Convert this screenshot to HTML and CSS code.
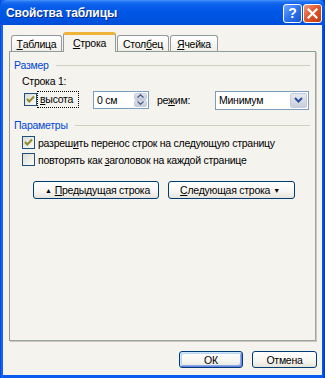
FILE: index.html
```html
<!DOCTYPE html>
<html>
<head>
<meta charset="utf-8">
<link rel="stylesheet" href="styles.css">
</head>
<body>
<div class="window">
  <div class="titlebar">
    <span class="title">Свойства таблицы</span>
    <div class="tb-buttons">
      <span class="tb-btn help">?</span>
      <span class="tb-btn close">
        <svg width="11" height="11" viewBox="0 0 11 11"><path d="M1.5 1.5 L9.5 9.5 M9.5 1.5 L1.5 9.5" stroke="#fff" stroke-width="2.2" stroke-linecap="square"/></svg>
      </span>
    </div>
  </div>
  <div class="client">
    <div class="tabs">
      <div class="tab t1"><u>Т</u>аблица</div>
      <div class="tab t2 active"><u>С</u>трока</div>
      <div class="tab t3">Стол<u>б</u>ец</div>
      <div class="tab t4"><u>Я</u>чейка</div>
    </div>
    <div class="panel">
      <div class="group-head"><span class="gl">Размер</span><span class="gline"></span></div>
      <div class="row-label">Строка 1:</div>
      <div class="size-row">
        <div class="cb-wrap focus">
          <span class="cb checked"><svg width="11" height="11" viewBox="0 0 11 11"><path d="M2 5 L4.3 7.5 L9 2.5" fill="none" stroke="#8F8A2E" stroke-width="2"/></svg></span>
          <span class="cb-text"><u>в</u>ысота</span>
        </div>
        <div class="spin">
          <span class="spin-val">0 см</span>
          <span class="spin-btns">
            <span class="sb up"><svg width="7" height="4" viewBox="0 0 7 4"><path d="M0.5 3.5 L3.5 0.8 L6.5 3.5" fill="none" stroke="#4D6185" stroke-width="1.4"/></svg></span>
            <span class="sb down"><svg width="7" height="4" viewBox="0 0 7 4"><path d="M0.5 0.5 L3.5 3.2 L6.5 0.5" fill="none" stroke="#4D6185" stroke-width="1.4"/></svg></span>
          </span>
        </div>
        <span class="mode-label">ре<u>ж</u>им:</span>
        <div class="select">
          <span class="sel-val">Минимум</span>
          <span class="sel-btn"><svg width="9" height="6" viewBox="0 0 9 6"><path d="M1 1 L4.5 4.5 L8 1" fill="none" stroke="#2D4F9E" stroke-width="2"/></svg></span>
        </div>
      </div>
      <div class="group-head g2"><span class="gl">Параметры</span><span class="gline"></span></div>
      <div class="cb-row first">
        <span class="cb checked"><svg width="11" height="11" viewBox="0 0 11 11"><path d="M2 5 L4.3 7.5 L9 2.5" fill="none" stroke="#8F8A2E" stroke-width="2"/></svg></span>
        <span class="cb-text">разреш<u>и</u>ть перенос строк на следующую страницу</span>
      </div>
      <div class="cb-row">
        <span class="cb"></span>
        <span class="cb-text">повторять как <u>з</u>аголовок на каждой странице</span>
      </div>
      <div class="nav-row">
        <button class="btn nav1"><span class="arr">&#9650;</span> <u>П</u>редыдущая строка</button>
        <button class="btn nav2"><u>С</u>ледующая строка <span class="arr">&#9660;</span></button>
      </div>
    </div>
    <div class="footer">
      <button class="btn ok">ОК</button>
      <button class="btn cancel">Отмена</button>
    </div>
  </div>
</div>
</body>
</html>
```
FILE: styles.css
```css
* { box-sizing: border-box; }
html, body { margin: 0; padding: 0; }
body {
  font-family: "Liberation Sans", Arial, sans-serif;
  font-size: 10.5px;
  letter-spacing: -0.25px;
  color: #000;
  background: #fff;
}
.window {
  width: 325px;
  height: 378px;
  display: flex;
  flex-direction: column;
  background: linear-gradient(90deg, #0039C8 0, #0A5CF0 1px, #1C6AF5 2px, #0A5CF0 3px, #0A5CF0 322px, #0045D8 324px, #0030B0 325px);
}
.titlebar {
  height: 25px;
  flex: none;
  display: flex;
  align-items: center;
  justify-content: space-between;
  padding-left: 6px;
  background: linear-gradient(#4A95FA 0, #1E6FF3 2px, #0A5FEA 5px, #0057E6 12px, #0052E0 20px, #004ED8 25px);
  border-radius: 7px 7px 0 0;
}
.title {
  color: #fff;
  font-weight: bold;
  font-size: 12px;
  letter-spacing: -0.1px;
  text-shadow: 1px 1px 0 #0A2A8C;
  margin-top: 1px;
}
.tb-buttons {
  display: flex;
  gap: 1px;
  margin-right: 3px;
  margin-top: 1px;
}
.tb-btn {
  width: 19px;
  height: 19px;
  border: 1px solid #fff;
  border-radius: 3px;
  display: flex;
  align-items: center;
  justify-content: center;
  color: #fff;
  font-weight: bold;
  font-size: 14px;
  letter-spacing: 0;
}
.help {
  background: linear-gradient(135deg, #6FA6FF 0, #2D72EE 50%, #1A55D0 100%);
}
.close {
  background: linear-gradient(135deg, #F29A7E 0, #E2582E 45%, #C23A12 100%);
}
.client {
  flex: 1;
  margin: 0 3px 3px 3px;
  background: #F4F3EE;
  display: flex;
  flex-direction: column;
}
.tabs {
  display: flex;
  align-items: flex-end;
  height: 26px;
  padding-left: 8px;
  position: relative;
  z-index: 1;
}
.tab {
  height: 16px;
  border: 1px solid #919B9C;
  border-bottom: none;
  border-radius: 3px 3px 0 0;
  background: linear-gradient(#FFFFFF, #F0EFE8);
  display: flex;
  align-items: center;
  justify-content: center;
  margin-right: 1px;
}
.t1 { width: 51px; }
.t2 { width: 53px; }
.t3 { width: 52px; }
.t4 { width: 48px; }
.tab.active {
  height: 20px;
  margin-bottom: -1px;
  background: #F4F3EE;
  border-top: 3px solid #F0B33A;
  padding-bottom: 1px;
  border-radius: 3px 3px 0 0;
}
.panel {
  margin-left: 6px;
  width: 307px;
  height: 290px;
  border: 1px solid #919B9C;
  border-right-color: #9EA49E;
  border-bottom-color: #9EA49E;
  box-shadow: 1px 1px 0 #C9C8BE;
  background: #F4F3EE;
  padding: 6px 5px 0 4px;
}
.group-head {
  display: flex;
  align-items: center;
  height: 14px;
}
.gl { color: #0046D5; }
.gline {
  flex: 1;
  height: 1px;
  background: #D0D0BF;
  margin-left: 7px;
}
.row-label {
  height: 13px;
  line-height: 13px;
  margin-top: 3px;
  padding-left: 8px;
}
.size-row {
  display: flex;
  align-items: center;
  height: 19px;
  margin-top: 2px;
  padding-left: 10px;
}
.cb-wrap {
  display: flex;
  align-items: center;
  height: 17px;
}
.cb-wrap .cb-text {
  border: 1px dotted #000;
  height: 17px;
  line-height: 15px;
  padding: 0 2px 0 2px;
  width: 42px;
  margin-left: 0;
}
.cb {
  width: 13px;
  height: 13px;
  flex: none;
  border: 1px solid #1C5180;
  background: linear-gradient(135deg, #DCDCD4 0, #EDEDE7 50%, #FBFBF8 100%);
  display: inline-flex;
  align-items: center;
  justify-content: center;
}
.spin {
  margin-left: 14px;
  width: 56px;
  height: 18px;
  border: 1px solid #7F9DB9;
  background: #fff;
  display: flex;
  align-items: stretch;
  justify-content: space-between;
}
.spin-val {
  padding-left: 3px;
  line-height: 16px;
}
.spin-btns {
  width: 15px;
  display: flex;
  flex-direction: column;
  padding: 1px;
  gap: 0;
}
.sb {
  flex: 1;
  display: flex;
  align-items: center;
  justify-content: center;
  background: linear-gradient(#E3E6EE, #C4CAD8);
  border: 1px solid #C5CCDB;
  border-radius: 2px;
}
.mode-label {
  margin-left: 8px;
  width: 58px;
}
.select {
  width: 94px;
  height: 19px;
  margin-top: 1px;
  border: 1px solid #7F9DB9;
  background: #fff;
  display: flex;
  justify-content: space-between;
  align-items: stretch;
}
.sel-val {
  padding-left: 3px;
  line-height: 17px;
}
.sel-btn {
  width: 17px;
  margin: 1px;
  border: 1px solid #C3CCDC;
  border-radius: 2px;
  background: linear-gradient(#E6E9F0, #C9CFDB);
  display: flex;
  align-items: center;
  justify-content: center;
}
.group-head.g2 { margin-top: 9px; }
.cb-row {
  display: flex;
  align-items: center;
  height: 13px;
  margin-top: 4px;
  padding-left: 8px;
}
.cb-row .cb-text { margin-left: 3px; }
.nav-row {
  display: flex;
  gap: 9px;
  margin-top: 15px;
  padding-left: 19px;
}
.btn {
  font-family: "Liberation Sans", Arial, sans-serif;
  font-size: 10.5px;
  letter-spacing: -0.25px;
  color: #000;
  height: 18px;
  padding: 0;
  border: 1px solid #003C74;
  border-radius: 3px;
  background: linear-gradient(#FFFFFF 0, #F6F5F1 60%, #E5E3DA 100%);
  display: flex;
  align-items: center;
  justify-content: center;
}
.nav1 { width: 126px; }
.nav2 { width: 127px; }
.arr { font-size: 7px; margin: 0 3px; }
.footer {
  display: flex;
  justify-content: flex-end;
  gap: 9px;
  margin-top: 10px;
  padding-right: 5px;
}
.ok, .cancel { height: 17px; }
.ok {
  width: 64px;
  box-shadow: inset 1px 1px 0 #CEE7FF, inset -1px -1px 0 #6982EE, inset 2px 2px 0 #BCD4F6, inset -2px -2px 0 #89ADE4;
}
.cancel { width: 65px; }
u { text-decoration: underline; text-underline-offset: 1px; }
```
